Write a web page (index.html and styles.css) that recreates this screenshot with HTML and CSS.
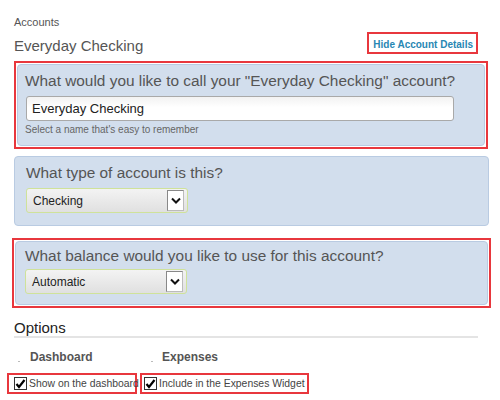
FILE: index.html
```html
<!DOCTYPE html>
<html>
<head>
    <meta charset="utf-8" />
    <title>Accounts</title>
    <link rel="stylesheet" href="styles.css">
</head>
<body>
<div class="page">
    <div class="crumb">Accounts</div>
    <div class="titleRow">
        <h1 class="title">Everyday Checking</h1>
        <a class="hideLink mark" href="#">Hide Account Details</a>
    </div>

    <div class="mark markName">
        <div class="panel panelName">
            <h2>What would you like to call your "Everyday Checking" account?</h2>
            <input type="text" class="inputClass" value="Everyday Checking">
            <div class="hint">Select a name that's easy to remember</div>
        </div>
    </div>

    <div class="panel panelType">
        <h2>What type of account is this?</h2>
        <div class="selectBox">
            <span class="selectText">Checking</span>
            <span class="selectArrow"><svg width="10" height="7" viewBox="0 0 10 7"><path d="M1 1.5 L5 5.5 L9 1.5" fill="none" stroke="#111" stroke-width="2"/></svg></span>
        </div>
    </div>

    <div class="mark markBalance">
        <div class="panel panelBalance">
            <h2>What balance would you like to use for this account?</h2>
            <div class="selectBox">
                <span class="selectText">Automatic</span>
                <span class="selectArrow"><svg width="10" height="7" viewBox="0 0 10 7"><path d="M1 1.5 L5 5.5 L9 1.5" fill="none" stroke="#111" stroke-width="2"/></svg></span>
            </div>
        </div>
    </div>

    <h3 class="options">Options</h3>
    <div class="optRow">
        <div class="optHead colDash"><span class="dot"></span>Dashboard</div>
        <div class="optHead colExp"><span class="dot"></span>Expenses</div>
    </div>
    <div class="checkRow">
        <label class="check mark checkDash"><span class="box"><svg width="11" height="10" viewBox="0 0 11 10"><path d="M1.5 5 L4 8 L9.5 1" fill="none" stroke="#000" stroke-width="2.2"/></svg></span>Show on the dashboard</label>
        <label class="check mark checkExp"><span class="box"><svg width="11" height="10" viewBox="0 0 11 10"><path d="M1.5 5 L4 8 L9.5 1" fill="none" stroke="#000" stroke-width="2.2"/></svg></span>Include in the Expenses Widget</label>
    </div>
</div>
</body>
</html>
```
FILE: styles.css
```css
body {
    margin: 0; background: #fff;
    font-family: "Liberation Sans", Arial, sans-serif; color: #555;
}
.page {
    padding: 16px 11px 0 14px;
    width: 475px;
}
.crumb {
    font-size: 11px; line-height: 13px; color: #555;
}
.titleRow {
    display: flex; justify-content: space-between; align-items: center;
    margin-top: 3px; height: 22px;
}
.title {
    font-size: 15px; font-weight: normal; margin: 4px 0 0 0; color: #555; line-height: 17px;
}
.mark {
    border: 2px solid #e8373d;
}
.hideLink {
    box-sizing: border-box; height: 22px;
    display: flex; align-items: center;
    font-size: 10px; font-weight: bold; color: #2887b3; text-decoration: none;
    padding: 2px 3px 0 4px; margin-right: 11px;
}
.markName {
    margin: 7px 1px 0 0; padding: 1px;
}
.markBalance {
    margin: 12px -2px 0 -2px; padding: 1px;
}
.panel {
    box-sizing: border-box;
    background: #d2deed; border: 1px solid #b9cbe2; border-radius: 4px;
    padding: 6px 10px 0 10px;
}
.panel h2 {
    font-size: 15.4px; font-weight: normal; color: #555; margin: 0; line-height: 19px;
    white-space: nowrap;
}
.panelName {
    height: 82px; padding-left: 7px;
}
.panelName .inputClass { margin-left: 1px; }
.panelType {
    margin-top: 7px; height: 70px; padding-left: 11px;
}
.panelBalance {
    height: 64px; padding-top: 4px; padding-left: 9px;
}
.inputClass {
    display: block; box-sizing: border-box;
    width: 428px; height: 25px; margin: 6px 0 0 -1px;
    border: 1px solid #a9a9a9; border-radius: 3px;
    background: linear-gradient(#f2f2f2, #fff 45%);
    font-family: "Liberation Sans", Arial, sans-serif; font-size: 13px; color: #222;
    padding: 0 5px;
}
.hint {
    font-size: 10px; line-height: 12px; color: #666; margin-top: 3px;
}
.selectBox {
    display: flex; align-items: center; justify-content: space-between;
    box-sizing: border-box; width: 162px; height: 25px; margin-top: 6px;
    border: 1px solid #cfe29a; border-radius: 3px;
    background: linear-gradient(#f3f3f3, #e0e0e0);
    padding: 0 3px 0 6px;
}
.panelBalance .selectBox { margin-top: 4px; }
.selectText {
    font-size: 12px; color: #222;
}
.selectArrow {
    display: flex; align-items: center; justify-content: center;
    width: 15px; height: 19px; background: #fff;
    border: 1px solid #888; border-right-color: #bbb; border-bottom-color: #bbb;
}
.options {
    font-size: 15px; font-weight: normal; color: #222; margin: 11px 11px 0 0;
    border-bottom: 2px solid #e4e4e4; line-height: 17px;
}
.optRow {
    display: flex; margin-top: 12px;
}
.optHead {
    display: flex; align-items: center; line-height: 14px;
    font-size: 12px; font-weight: bold; color: #555;
}
.colDash { width: 133px; }
.dot {
    display: inline-block; width: 2px; height: 1px; background: #bbb;
    margin: 8px 10px 0 4px;
}
.colExp .dot { margin-right: 9px; }
.checkRow {
    display: flex; margin-top: 9px; margin-left: -7px;
}
.check {
    display: flex; align-items: center; white-space: nowrap;
    font-size: 10.4px; color: #444;
    box-sizing: border-box; height: 21px; padding: 0 2px 0 5px;
}
.checkDash { width: 130px; }
.checkExp { margin-left: 3px; width: 169px; padding-left: 2px; }
.box {
    display: flex; align-items: center; justify-content: center;
    box-sizing: border-box; width: 13px; height: 13px;
    border: 1px solid #333; background: #fff; margin-right: 2px;
}
```
